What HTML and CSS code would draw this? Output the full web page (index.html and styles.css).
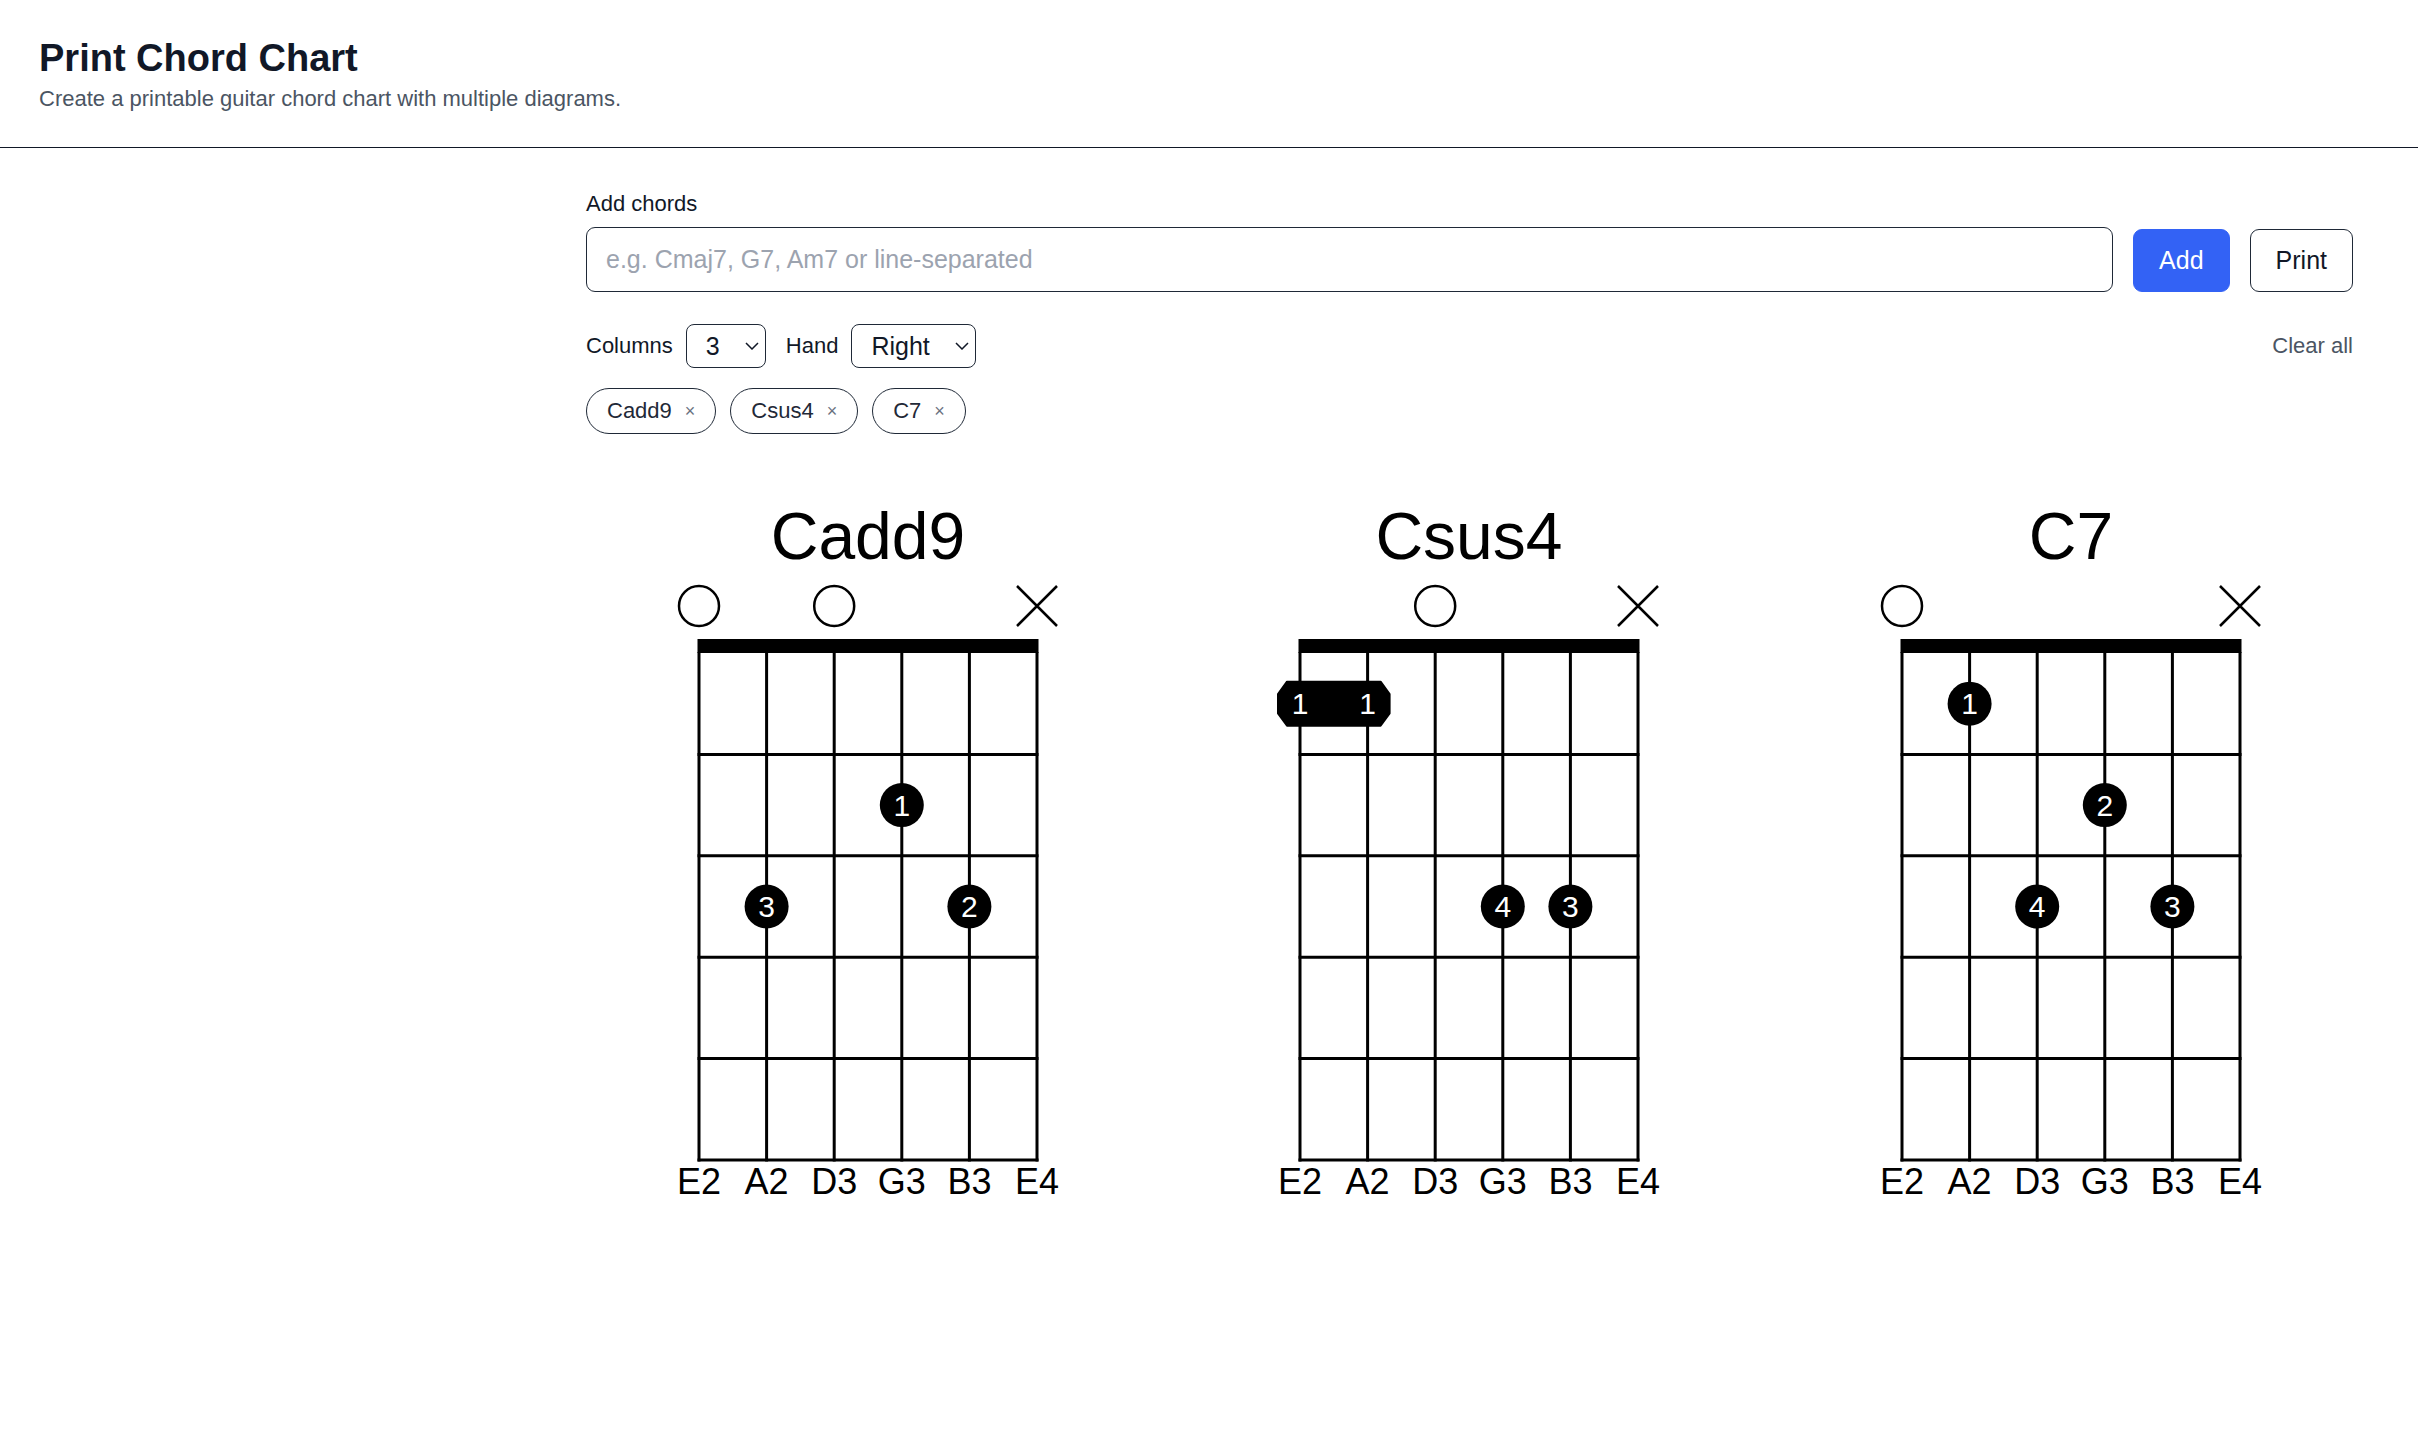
FILE: index.html
```html
<!DOCTYPE html>
<html lang="en">
<head>
  <meta charset="UTF-8" />
  <meta name="viewport" content="width=device-width, initial-scale=1.0"/>
  <title>Print Chord Chart</title>
  <link rel="stylesheet" href="styles.css">
</head>
<body>
  <!-- shared fretboard grid, reused by every diagram -->
  <svg class="sprite" aria-hidden="true">
    <symbol id="fretboard" viewBox="0 0 420 730">
      <rect x="39.5" y="159" width="341" height="14" fill="#000"/>
      <path d="M41 172V681.5M108.6 172V681.5M176.2 172V681.5M243.8 172V681.5M311.4 172V681.5M379 172V681.5" stroke="#000" stroke-width="3"/>
      <path d="M39.5 274.4H380.5M39.5 375.8H380.5M39.5 477.2H380.5M39.5 578.6H380.5M39.5 680H380.5" stroke="#000" stroke-width="3"/>
    </symbol>
  </svg>

  <header class="page-header">
    <h1>Print Chord Chart</h1>
    <p class="subtitle">Create a printable guitar chord chart with multiple diagrams.</p>
  </header>

  <main class="workspace">
    <label class="field-label" for="chordInput">Add chords</label>
    <div class="entry-row">
      <input id="chordInput" type="text" placeholder="e.g. Cmaj7, G7, Am7 or line-separated">
      <button class="btn btn-primary">Add</button>
      <button class="btn btn-outline">Print</button>
    </div>

    <div class="options-row">
      <div class="options">
        <div class="option">
          <span>Columns</span>
          <div class="select-wrap">
            <select><option>3</option></select>
            <svg class="chevron" viewBox="0 0 14 8"><path d="M1 1l6 6 6-6" fill="none" stroke="#111827" stroke-width="1.5"/></svg>
          </div>
        </div>
        <div class="option">
          <span>Hand</span>
          <div class="select-wrap">
            <select><option>Right</option></select>
            <svg class="chevron" viewBox="0 0 14 8"><path d="M1 1l6 6 6-6" fill="none" stroke="#111827" stroke-width="1.5"/></svg>
          </div>
        </div>
      </div>
      <button class="link-btn">Clear all</button>
    </div>

    <div class="chips">
      <span class="chip">Cadd9 <span class="chip-remove">×</span></span>
      <span class="chip">Csus4 <span class="chip-remove">×</span></span>
      <span class="chip">C7 <span class="chip-remove">×</span></span>
    </div>

    <section class="chart">
      <div class="diagram">
        <svg viewBox="0 0 420 730" width="420" height="730">
          <text class="chord-name" x="210" y="79">Cadd9</text>
          <circle class="open" cx="41" cy="126" r="20"/>
          <circle class="open" cx="176.2" cy="126" r="20"/>
          <path class="muted" d="M359 106L399 146M399 106L359 146"/>
          <use href="#fretboard"/>
          <circle class="dot" cx="243.8" cy="325.1" r="22"/><text class="finger" x="243.8" y="335.8">1</text>
          <circle class="dot" cx="108.6" cy="426.5" r="22"/><text class="finger" x="108.6" y="437.2">3</text>
          <circle class="dot" cx="311.4" cy="426.5" r="22"/><text class="finger" x="311.4" y="437.2">2</text>
          <text class="note" x="41" y="714">E2</text>
          <text class="note" x="108.6" y="714">A2</text>
          <text class="note" x="176.2" y="714">D3</text>
          <text class="note" x="243.8" y="714">G3</text>
          <text class="note" x="311.4" y="714">B3</text>
          <text class="note" x="379" y="714">E4</text>
        </svg>
      </div>

      <div class="diagram">
        <svg viewBox="0 0 420 730" width="420" height="730">
          <text class="chord-name" x="210" y="79">Csus4</text>
          <circle class="open" cx="176.2" cy="126" r="20"/>
          <path class="muted" d="M359 106L399 146M399 106L359 146"/>
          <use href="#fretboard"/>
          <polygon class="barre" points="28,201.7 121.6,201.7 130.6,214 130.6,233.4 121.6,245.7 28,245.7 19,233.4 19,214"/>
          <text class="finger" x="41" y="234.4">1</text>
          <text class="finger" x="108.6" y="234.4">1</text>
          <circle class="dot" cx="243.8" cy="426.5" r="22"/><text class="finger" x="243.8" y="437.2">4</text>
          <circle class="dot" cx="311.4" cy="426.5" r="22"/><text class="finger" x="311.4" y="437.2">3</text>
          <text class="note" x="41" y="714">E2</text>
          <text class="note" x="108.6" y="714">A2</text>
          <text class="note" x="176.2" y="714">D3</text>
          <text class="note" x="243.8" y="714">G3</text>
          <text class="note" x="311.4" y="714">B3</text>
          <text class="note" x="379" y="714">E4</text>
        </svg>
      </div>

      <div class="diagram">
        <svg viewBox="0 0 420 730" width="420" height="730">
          <text class="chord-name" x="210" y="79">C7</text>
          <circle class="open" cx="41" cy="126" r="20"/>
          <path class="muted" d="M359 106L399 146M399 106L359 146"/>
          <use href="#fretboard"/>
          <circle class="dot" cx="108.6" cy="223.7" r="22"/><text class="finger" x="108.6" y="234.4">1</text>
          <circle class="dot" cx="243.8" cy="325.1" r="22"/><text class="finger" x="243.8" y="335.8">2</text>
          <circle class="dot" cx="176.2" cy="426.5" r="22"/><text class="finger" x="176.2" y="437.2">4</text>
          <circle class="dot" cx="311.4" cy="426.5" r="22"/><text class="finger" x="311.4" y="437.2">3</text>
          <text class="note" x="41" y="714">E2</text>
          <text class="note" x="108.6" y="714">A2</text>
          <text class="note" x="176.2" y="714">D3</text>
          <text class="note" x="243.8" y="714">G3</text>
          <text class="note" x="311.4" y="714">B3</text>
          <text class="note" x="379" y="714">E4</text>
        </svg>
      </div>
    </section>
  </main>
</body>
</html>
```

FILE: styles.css
```css
body {
  margin: 0;
  font-family: "Liberation Sans", Arial, sans-serif;
  color: #111827;
  background: #fff;
}

.sprite {
  position: absolute;
  width: 0;
  height: 0;
  overflow: hidden;
}

.page-header {
  padding: 36px 39px 32.5px;
  border-bottom: 1.5px solid #111827;
}

.page-header h1 {
  margin: 0;
  font-size: 38px;
  line-height: 1.2;
  font-weight: 700;
}

.subtitle {
  margin: 2px 0 0;
  font-size: 22px;
  line-height: 1.4;
  color: #4b5563;
}

.workspace {
  padding: 41.5px 65px 0 586px;
}

.field-label {
  display: block;
  font-size: 22px;
  line-height: 1.4;
  margin-bottom: 7px;
}

.entry-row {
  display: flex;
  gap: 20px;
  height: 65px;
}

.entry-row input {
  flex: 1;
  min-width: 0;
  box-sizing: border-box;
  border: 1.5px solid #1f2937;
  border-radius: 9px;
  padding: 0 19px;
  font-family: inherit;
  font-size: 25px;
  color: #111827;
}

.entry-row input::placeholder {
  color: #9ca3af;
}

.btn {
  font-family: inherit;
  font-size: 25px;
  padding: 0 25px;
  border-radius: 9px;
  border: 1.5px solid #1f2937;
  background: #fff;
  color: #111827;
  margin-top: 2px;
}

.btn-primary {
  background: #3362f5;
  border-color: #3362f5;
  color: #fff;
}

.options-row {
  display: flex;
  align-items: center;
  justify-content: space-between;
  margin-top: 32px;
  height: 44px;
}

.options {
  display: flex;
  align-items: center;
  gap: 20px;
}

.option {
  display: flex;
  align-items: center;
  gap: 13px;
  font-size: 22px;
}

.select-wrap {
  position: relative;
}

.select-wrap select {
  appearance: none;
  -webkit-appearance: none;
  height: 44px;
  box-sizing: border-box;
  padding: 0 45px 0 19px;
  border: 1.5px solid #1f2937;
  border-radius: 8px;
  background: #fff;
  font-family: inherit;
  font-size: 25px;
  color: #111827;
}

.chevron {
  position: absolute;
  right: 7px;
  top: 50%;
  width: 14px;
  height: 8px;
  transform: translateY(-50%);
  pointer-events: none;
}

.link-btn {
  background: none;
  border: 0;
  padding: 0;
  font-family: inherit;
  font-size: 22px;
  color: #4b5563;
}

.chips {
  display: flex;
  gap: 14px;
  margin-top: 20px;
}

.chip {
  display: inline-flex;
  align-items: center;
  gap: 13px;
  height: 46px;
  box-sizing: border-box;
  padding: 0 20px;
  border: 1.5px solid #1f2937;
  border-radius: 999px;
  font-size: 22px;
  color: #1f2937;
}

.chip-remove {
  font-size: 18px;
  color: #6b7280;
}

.chart {
  display: grid;
  grid-template-columns: repeat(3, 1fr);
  column-gap: 38px;
  margin-top: 45.5px;
}

.diagram {
  display: flex;
  justify-content: center;
}

.diagram svg {
  display: block;
  font-family: "Liberation Sans", Arial, sans-serif;
}

.chord-name {
  font-size: 66px;
  text-anchor: middle;
  fill: #000;
}

.open {
  fill: none;
  stroke: #000;
  stroke-width: 2.5;
}

.muted {
  stroke: #000;
  stroke-width: 2.5;
}

.dot {
  fill: #000;
}

.barre {
  fill: #000;
  stroke: #000;
  stroke-width: 2;
  stroke-linejoin: round;
}

.finger {
  font-size: 30px;
  text-anchor: middle;
  fill: #fff;
}

.note {
  font-size: 36px;
  text-anchor: middle;
  fill: #000;
}
```
